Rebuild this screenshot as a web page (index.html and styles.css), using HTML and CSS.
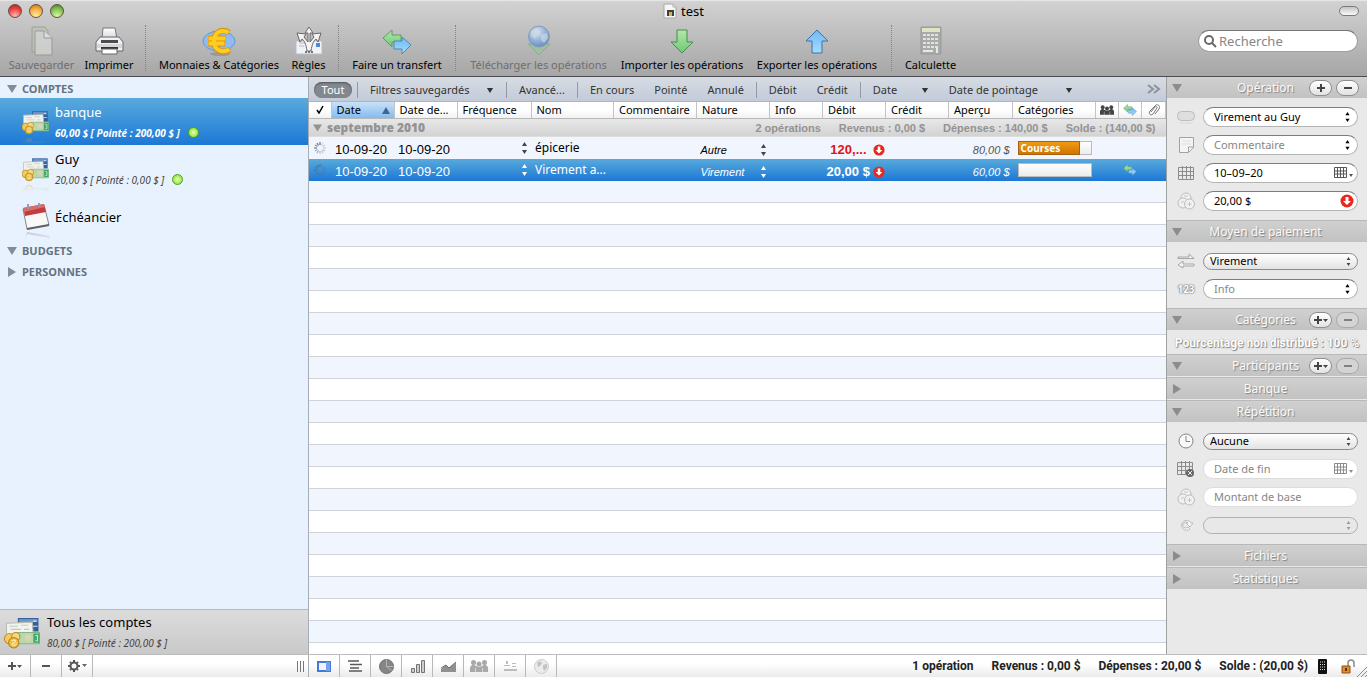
FILE: index.html
```html
<!DOCTYPE html>
<html lang="fr">
<head>
    <meta charset="UTF-8">
    <meta name="viewport" content="width=device-width, initial-scale=1.0">
    <title>test</title>
    <link rel="stylesheet" href="styles.css">
</head>
<body>
    <!-- shared icons -->
    <svg class="defs" aria-hidden="true">
        <defs>
            <linearGradient id="green" x1="0" y1="0" x2="0" y2="1"><stop offset="0" stop-color="#b4e8a8"/><stop offset="1" stop-color="#6cc878"/></linearGradient>
            <linearGradient id="blue" x1="0" y1="0" x2="0" y2="1"><stop offset="0" stop-color="#6fb8f5"/><stop offset="1" stop-color="#a4dcff"/></linearGradient>
            <linearGradient id="paper" x1="0" y1="0" x2="0" y2="1"><stop offset="0" stop-color="#ffffff"/><stop offset="1" stop-color="#d4d6da"/></linearGradient>
            <radialGradient id="globe" cx="0.4" cy="0.3" r="0.7"><stop offset="0" stop-color="#e4effc"/><stop offset="0.6" stop-color="#86aee0"/><stop offset="1" stop-color="#5a86c4"/></radialGradient>
        </defs>
        <symbol id="money" viewBox="0 0 36 32">
            <path d="M13 1h20v13H13z" fill="#2f5f9c"/>
            <path d="M14 2h18v3H14z" fill="#6f98c8"/>
            <path d="M28 4h3M27 9h5" stroke="#dfe9f5"/>
            <path d="M2 6l25-1 1 13-26 1z" fill="#f2f3ec" stroke="#b8bdb4"/>
            <path d="M5 9h8M16 8h7M6 12h10M19 12h5" stroke="#c3cac4"/>
            <path d="M12 15h22v11H12z" fill="#b9d8ac" stroke="#88b48c"/>
            <path d="M28 16h6v9h-6z" fill="#46a868"/>
            <circle cx="23" cy="20" r="3" fill="#d9d4b4"/>
            <path d="M30 18h2v5h-2" fill="none" stroke="#c9efd0"/>
            <circle cx="5" cy="21" r="5" fill="#f1cc63" stroke="#c08d25"/>
            <circle cx="11" cy="19" r="4" fill="#f4d87c" stroke="#c08d25"/>
            <circle cx="9" cy="25" r="5" fill="#eebf45" stroke="#b9821d"/>
            <path d="M7 23c4-2 5 1 2 2s-1 4 3 1" fill="none" stroke="#fff0b5"/>
        </symbol>
        <symbol id="transfer" viewBox="0 0 30 26">
            <path d="M1 9l9-8v5h9v7h-9v5z" fill="url(#green)" stroke="#5b9c63"/>
            <path d="M29 16l-9-8v4h-8v8h8v5z" fill="url(#blue)" stroke="#5187b8"/>
        </symbol>
        <symbol id="updown" viewBox="0 0 5 12">
            <path d="M0 4l2.500-4L5 4zM0 8l2.500 4L5 8z" fill="currentColor"/>
        </symbol>
        <symbol id="out" viewBox="0 0 14 14">
            <circle cx="7" cy="7" r="6.500" fill="#e8281c"/>
            <path d="M5.500 3h3v4h2.500L7 11 3 7h2.500z" fill="#fff"/>
        </symbol>
        <symbol id="down" viewBox="0 0 10 8"><path d="M0 0h10L5 8z" fill="currentColor"/></symbol>
        <symbol id="right" viewBox="0 0 8 10"><path d="M0 0v10l8-5z" fill="currentColor"/></symbol>
        <symbol id="grid" viewBox="0 0 16 14">
            <path d="M0.500 1.500h15v12h-15zM0 5.500h16M0 9.500h16M4.500 0v14M8.500 0v14M12.500 0v14" fill="none" stroke="currentColor"/>
        </symbol>
        <symbol id="coins" viewBox="0 0 18 18">
            <g fill="#f1f1f1" stroke="#bcbcbc"><circle cx="9" cy="6" r="5"/><circle cx="6" cy="11" r="5"/><circle cx="12.500" cy="12" r="5"/></g>
            <path d="M12.500 10v4M10.500 12h4M4 10h3M7 4h4" stroke="#c4c4c4" fill="none"/>
        </symbol>
        <symbol id="people" viewBox="0 0 18 14">
            <circle cx="3.500" cy="3.500" r="2.500" fill="currentColor"/><circle cx="14.500" cy="3.500" r="2.500" fill="currentColor"/><circle cx="9" cy="5" r="2.500" fill="currentColor"/>
            <path d="M0 13V8l3-3 3 2 3 1 3-1 3-2 3 3v5z" fill="currentColor"/>
            <path d="M5.500 9v4M12.500 9v4" stroke="#fff" stroke-opacity="0.500"/>
        </symbol>
        <symbol id="spinner" viewBox="0 0 12 12">
            <g stroke="#566b84" stroke-width="1.300">
                <path d="M6 0v3M3 1l1.500 2.500" opacity="0.900"/><path d="M1 3l2.500 1.500M0 6h3" opacity="0.700"/><path d="M1 9l2.500-1.500M3 11l1.500-2.500" opacity="0.500"/><path d="M6 9v3M9 11L7.500 8.500M11 9L8.500 7.500" opacity="0.350"/><path d="M9 6h3M11 3L8.500 4.500M9 1L7.500 3.500" opacity="0.250"/>
            </g>
        </symbol>
        <symbol id="plus" viewBox="0 0 10 10"><path d="M5 1v8M1 5h8" stroke="currentColor" stroke-width="2"/></symbol>
        <symbol id="minus" viewBox="0 0 10 10"><path d="M1 5h8" stroke="currentColor" stroke-width="2"/></symbol>
        <symbol id="plusmenu" viewBox="0 0 16 10"><path d="M5 1v8M1 5h8" stroke="currentColor" stroke-width="2"/><path d="M10 4h5l-2.500 3z" fill="currentColor"/></symbol>
    </svg>

    <header class="chrome">
        <div class="titlebar">
            <div class="lights">
                <button class="light red" aria-label="Fermer"></button>
                <button class="light orange" aria-label="Réduire"></button>
                <button class="light lime" aria-label="Agrandir"></button>
            </div>
            <h1>
                <svg width="14" height="16" viewBox="0 0 14 16"><path d="M1 1h9l3 3v11H1z" fill="#f7f7f2" stroke="#a9a9a4"/><path d="M10 1v3h3" fill="#ddd" stroke="#b5b5b0"/><path d="M4 7h7v6H4z" fill="#3a4048"/><path d="M6 9h3v4H6z" fill="#d8b24a"/></svg>
                test
            </h1>
            <button class="lozenge" aria-label="Barre d'outils"></button>
        </div>
        <div class="toolbar">
            <button class="tool" disabled>
                <svg width="32" height="32" viewBox="0 0 32 32"><path d="M6 2h13l3 4v21H6z" fill="#bdc3b5" stroke="#929a8e"/><path d="M9 6h9l8 7v17H9z" fill="#d3d4d2" stroke="#8f9391"/><path d="M18 6v7h8" fill="#e4e4e2" stroke="#8f9391"/></svg>
                <span>Sauvegarder</span>
            </button>
            <button class="tool">
                <svg width="32" height="32" viewBox="0 0 32 32"><path d="M9 14l1-11h12l2 11z" fill="url(#paper)" stroke="#777"/><path d="M3 17l4-5h19l4 5v9H3z" fill="#f0f0f2" stroke="#666"/><path d="M8 15h17v3H8z" fill="#4c4c4c"/><path d="M4 19h25v4H4z" fill="#d5d6da"/><path d="M8 23h17" stroke="#333" stroke-width="2"/><path d="M9 24h15v5H9z" fill="#fff" stroke="#666"/></svg>
                <span>Imprimer</span>
            </button>
            <i class="divider"></i>
            <button class="tool">
                <svg width="34" height="32" viewBox="0 0 34 32"><ellipse cx="18" cy="29" rx="10" ry="2" fill="#808080" opacity="0.500"/><ellipse cx="17" cy="16" rx="16" ry="10" fill="#8fbbf0" stroke="#6797d6"/><g fill="none"><path d="M27 7.500C20 3.500 12 7 12 16s8 13 16 8.500M6 13.500h18M6 18.500h17" stroke="#d79412" stroke-width="6"/><path d="M26.500 7.500C20 4 12 7 12 16s8 12.500 15.500 8.500M6.500 13.500h17M6.500 18.500h16" stroke="#ffcc22" stroke-width="4"/></g></svg>
                <span>Monnaies &amp; Catégories</span>
            </button>
            <button class="tool">
                <svg width="32" height="32" viewBox="0 0 32 32"><path d="M3 16h26v13H3z" fill="#f0f2f7" stroke="#b9bdc8"/><path d="M23 18h4v4h-4z" fill="#4d86dc"/><path d="M6 18h6M6 21h5" stroke="#bbb"/><path d="M14 26c-1-7-3-11-5-12l-2 3-3-9 9 1-2 3 4 5V8h-3l4-6 4 6h-3v9l4-5-2-3 9-1-3 9-2-3c-2 1-4 5-5 12z" fill="#f4f4f4" stroke="#666"/><path d="M12 27h8" stroke="#777" stroke-width="2" stroke-dasharray="2 1"/></svg>
                <span>Règles</span>
            </button>
            <i class="divider"></i>
            <button class="tool">
                <svg width="30" height="32" viewBox="0 -4 30 32"><use href="#transfer" width="30" height="26"/></svg>
                <span>Faire un transfert</span>
            </button>
            <i class="divider"></i>
            <button class="tool" disabled>
                <svg width="32" height="32" viewBox="0 0 32 32"><path d="M5 19h22L16 30z" fill="#9bc29c" stroke="#82a886"/><circle cx="16" cy="11.500" r="10.500" fill="url(#globe)" stroke="#7492b8"/><path d="M8 6l6-3 3 3-3 3-2 5-4-3zM18 10l6-2 1 5-4 5-3-3z" fill="#d3e0ee" opacity="0.700"/></svg>
                <span>Télécharger les opérations</span>
            </button>
            <button class="tool">
                <svg width="32" height="32" viewBox="0 0 32 32"><path d="M11 5h10v12h6L16 28 5 17h6z" fill="url(#green)" stroke="#4b8a50"/></svg>
                <span>Importer les opérations</span>
            </button>
            <button class="tool">
                <svg width="32" height="32" viewBox="0 0 32 32"><path d="M11 28h10V16h6L16 5 5 16h6z" fill="url(#blue)" stroke="#3c72a4"/></svg>
                <span>Exporter les opérations</span>
            </button>
            <i class="divider"></i>
            <button class="tool">
                <svg width="32" height="32" viewBox="0 0 32 32"><path d="M6 2h20v27H6z" fill="#a9aba8" stroke="#979997"/><path d="M7 3h18v4H7z" fill="#dfe4c4"/><path d="M8 10h16M8 14h16M8 18h16M8 22h16" stroke="#e0e2e0" stroke-width="2" stroke-dasharray="3 1"/><path d="M8 26h10M22 22v6" stroke="#e6e8e6" stroke-width="2"/></svg>
                <span>Calculette</span>
            </button>
            <label class="search">
                <svg width="14" height="14" viewBox="0 0 14 14"><circle cx="6" cy="6" r="4" fill="none" stroke="#6a6a6a" stroke-width="2"/><path d="M9 9l4 4" stroke="#6a6a6a" stroke-width="2"/></svg>
                <input type="search" placeholder="Recherche" aria-label="Recherche">
            </label>
        </div>
    </header>

    <main class="panes">
        <nav class="sidebar">
            <h2><svg width="10" height="8"><use href="#down"/></svg>COMPTES</h2>
            <ul>
                <li class="account selected">
                    <svg class="picture" width="28" height="26"><use href="#money"/></svg>
                    <div>
                        <a href="#banque">banque</a>
                        <p>60,00 $ [ Pointé : 200,00 $ ] <i class="led"></i></p>
                    </div>
                </li>
                <li class="account">
                    <svg class="picture" width="28" height="26"><use href="#money"/></svg>
                    <div>
                        <a href="#guy">Guy</a>
                        <p>20,00 $ [ Pointé : 0,00 $ ] <i class="led"></i></p>
                    </div>
                </li>
                <li class="account">
                    <svg class="picture" width="28" height="28" viewBox="0 0 28 28"><path d="M1 6l21-4 5 20-22 4z" fill="#f8f8f8" stroke="#85868a"/><path d="M1 5l21-4 2 8-21 4z" fill="#c23c3e"/><path d="M1 5l21-4 1 3L2 9z" fill="#da6d6c"/><path d="M6 1v5M17 0v4" stroke="#91a0a8" stroke-width="2"/><path d="M5 26l22-4" stroke="#5e6064" stroke-width="2"/></svg>
                    <div><a href="#echeancier">Échéancier</a></div>
                </li>
            </ul>
            <h2><svg width="10" height="8"><use href="#down"/></svg>BUDGETS</h2>
            <h2><svg width="10" height="10"><use href="#right"/></svg>PERSONNES</h2>
            <div class="account total">
                <svg width="38" height="33"><use href="#money"/></svg>
                <div>
                    <a href="#tous">Tous les comptes</a>
                    <p>80,00 $ [ Pointé : 200,00 $ ]</p>
                </div>
            </div>
        </nav>

        <section class="ledger">
            <div class="filters">
                <button class="active">Tout</button>
                <i></i>
                <label class="menu wide"><select aria-label="Filtres"><option>Filtres sauvegardés</option></select><svg width="8" height="5"><use href="#down"/></svg></label>
                <i></i>
                <button>Avancé...</button>
                <i></i>
                <button>En cours</button>
                <button>Pointé</button>
                <button>Annulé</button>
                <i></i>
                <button>Débit</button>
                <button>Crédit</button>
                <i></i>
                <label class="menu"><select aria-label="Date"><option>Date</option></select><svg width="8" height="5"><use href="#down"/></svg></label>
                <label class="menu wide"><select aria-label="Date de pointage"><option>Date de pointage</option></select><svg width="8" height="5"><use href="#down"/></svg></label>
                <button class="more" aria-label="Plus de filtres"><svg width="14" height="10" viewBox="0 0 14 10"><path d="M1 1l5 4-5 4M7 1l5 4-5 4" fill="none" stroke="#8d929b" stroke-width="2"/></svg></button>
            </div>
            <table>
                <colgroup>
                    <col class="c22"><col class="c63"><col class="c63"><col class="c74"><col><col class="c83"><col class="c73"><col class="c53"><col class="c63"><col class="c63"><col class="c64"><col class="c83"><col class="c23"><col class="c23"><col class="c24">
                </colgroup>
                <thead>
                    <tr>
                        <th class="mark"><svg width="8" height="9" viewBox="0 0 8 9"><path d="M1 5l2 3 4-7" fill="none" stroke="#000" stroke-width="1.500"/></svg></th>
                        <th class="sorted">Date <svg width="8" height="7" viewBox="0 0 8 7"><path d="M0 7h8L4 0z" fill="#44658f"/></svg></th>
                        <th>Date de...</th>
                        <th>Fréquence</th>
                        <th>Nom</th>
                        <th>Commentaire</th>
                        <th>Nature</th>
                        <th>Info</th>
                        <th>Débit</th>
                        <th>Crédit</th>
                        <th>Aperçu</th>
                        <th>Catégories</th>
                        <th class="mark"><svg width="14" height="12"><use href="#people"/></svg></th>
                        <th class="mark"><svg width="14" height="12"><use href="#transfer"/></svg></th>
                        <th class="mark"><svg width="12" height="12" viewBox="0 0 12 12"><path d="M3 8l4-5c1-1 3 0 2 1L5 10c-2 2-5 0-3-3l5-5c2-3 6 0 4 3l-4 5" fill="none" stroke="#777"/></svg></th>
                    </tr>
                </thead>
                <tbody>
                    <tr class="group">
                        <td colspan="15">
                            <div>
                                <svg width="9" height="8"><use href="#down"/></svg>
                                <strong>septembre 2010</strong>
                                <span>2 opérations</span>
                                <span>Revenus : 0,00 $</span>
                                <span>Dépenses : 140,00 $</span>
                                <span>Solde : (140,00 $)</span>
                            </div>
                        </td>
                    </tr>
                    <tr>
                        <td class="mark"><svg width="12" height="12"><use href="#spinner"/></svg></td>
                        <td class="date">10-09-20</td>
                        <td class="date">10-09-20</td>
                        <td class="step"><svg width="5" height="12"><use href="#updown"/></svg></td>
                        <td>épicerie</td>
                        <td></td>
                        <td class="kind">
                            <div>Autre <svg width="5" height="12"><use href="#updown"/></svg></div>
                        </td>
                        <td></td>
                        <td class="amount red" colspan="2"><div><span>120,...</span><svg width="12" height="12"><use href="#out"/></svg></div></td>
                        <td class="preview">80,00 $</td>
                        <td class="share"><div class="bar"><span style="width: 84%">Courses</span></div></td>
                        <td></td>
                        <td></td>
                        <td></td>
                    </tr>
                    <tr class="selected">
                        <td class="mark"><svg width="12" height="12"><use href="#spinner"/></svg></td>
                        <td class="date">10-09-20</td>
                        <td class="date">10-09-20</td>
                        <td class="step"><svg width="5" height="12"><use href="#updown"/></svg></td>
                        <td>Virement a...</td>
                        <td></td>
                        <td class="kind">
                            <div>Virement <svg width="5" height="12"><use href="#updown"/></svg></div>
                        </td>
                        <td></td>
                        <td class="amount" colspan="2"><div><span>20,00 $</span><svg width="12" height="12"><use href="#out"/></svg></div></td>
                        <td class="preview">60,00 $</td>
                        <td class="share"><div class="bar"></div></td>
                        <td></td>
                        <td class="mark"><svg width="14" height="12"><use href="#transfer"/></svg></td>
                        <td></td>
                    </tr>
                </tbody>
            </table>
            <div class="stripes"></div>
        </section>

        <aside class="inspector">
            <h2>
                <svg width="10" height="8"><use href="#down"/></svg><span>Opération</span>
                <div><button aria-label="Ajouter"><svg width="10" height="10"><use href="#plus"/></svg></button><button aria-label="Supprimer"><svg width="10" height="10"><use href="#minus"/></svg></button></div>
            </h2>
            <div class="fields">
                <div class="row">
                    <label for="payee"><svg width="18" height="14" viewBox="0 0 18 14"><rect x="0.500" y="1.500" width="17" height="9" rx="4" fill="#dedede" stroke="#bdbdbd"/><path d="M3 13h12" stroke="#d8d8d8"/></svg></label>
                    <div class="field"><input id="payee" value="Virement au Guy" aria-label="Nom"><svg class="arrows" width="5" height="10"><use href="#updown"/></svg></div>
                </div>
                <div class="row">
                    <label for="note"><svg width="15" height="16" viewBox="0 0 15 16"><path d="M0.500 0.500h14v10l-5 5h-9zM9.500 15v-5h5" fill="#f4f4f4" stroke="#a2a2a2"/><path d="M3 4h9M3 7h9" stroke="#ddd"/></svg></label>
                    <div class="field"><input id="note" placeholder="Commentaire" aria-label="Commentaire"><svg class="arrows" width="5" height="10"><use href="#updown"/></svg></div>
                </div>
                <div class="row">
                    <label for="day"><svg class="grey" width="16" height="14"><use href="#grid"/></svg></label>
                    <div class="field"><input id="day" value="10–09–20" aria-label="Date"><svg class="dark" width="20" height="12" viewBox="0 0 20 12"><path d="M0.500 0.500h12v10h-12zM0 4h13M0 7h13M3.500 0v11M6.500 0v11M9.500 0v11" fill="none" stroke="currentColor"/><path d="M15 7h4l-2 3z" fill="currentColor"/></svg></div>
                </div>
                <div class="row">
                    <label for="sum"><svg width="18" height="18"><use href="#coins"/></svg></label>
                    <div class="field"><input id="sum" value="20,00 $" aria-label="Montant"><svg width="14" height="14"><use href="#out"/></svg></div>
                </div>
            </div>

            <h2><svg width="10" height="8"><use href="#down"/></svg><span>Moyen de paiement</span></h2>
            <div class="fields">
                <div class="row">
                    <label for="method"><svg width="18" height="16" viewBox="0 0 18 16"><path d="M1 4h11V1l5 4.500H1zM17 11H6V8l-5 4 5 3v-2h11z" fill="#f3f3f3" stroke="#a6a6a6"/></svg></label>
                    <div class="popup"><select id="method" aria-label="Moyen"><option>Virement</option></select><svg width="5" height="9"><use href="#updown"/></svg></div>
                </div>
                <div class="row">
                    <label for="info" class="digits">123</label>
                    <div class="field"><input id="info" placeholder="Info"><svg class="arrows" width="5" height="10"><use href="#updown"/></svg></div>
                </div>
            </div>

            <h2>
                <svg width="10" height="8"><use href="#down"/></svg><span>Catégories</span>
                <div><button aria-label="Ajouter"><svg width="16" height="10"><use href="#plusmenu"/></svg></button><button disabled aria-label="Supprimer"><svg width="10" height="10"><use href="#minus"/></svg></button></div>
            </h2>
            <p class="leftover">Pourcentage non distribué : 100 %</p>

            <h2>
                <svg width="10" height="8"><use href="#down"/></svg><span>Participants</span>
                <div><button aria-label="Ajouter"><svg width="16" height="10"><use href="#plusmenu"/></svg></button><button disabled aria-label="Supprimer"><svg width="10" height="10"><use href="#minus"/></svg></button></div>
            </h2>
            <h2><svg width="10" height="10"><use href="#right"/></svg><span>Banque</span></h2>
            <h2><svg width="10" height="8"><use href="#down"/></svg><span>Répétition</span></h2>
            <div class="fields">
                <div class="row">
                    <label for="repeat"><svg width="16" height="16" viewBox="0 0 16 16"><circle cx="8" cy="8" r="7" fill="#fafafa" stroke="#858585"/><path d="M8 3v5.500h4" fill="none" stroke="#858585"/></svg></label>
                    <div class="popup"><select id="repeat" aria-label="Répétition"><option>Aucune</option></select><svg width="5" height="9"><use href="#updown"/></svg></div>
                </div>
                <div class="row">
                    <label for="end"><svg class="grey" width="18" height="17" viewBox="0 0 18 17"><use href="#grid" width="16" height="14"/><circle cx="13" cy="12" r="4" fill="#666"/><path d="M11 10l4 4M15 10l-4 4" stroke="#eee"/></svg></label>
                    <div class="field flat"><input id="end" placeholder="Date de fin" aria-label="Date de fin"><svg class="grey" width="20" height="12" viewBox="0 0 20 12"><path d="M0.500 0.500h12v10h-12zM0 4h13M0 7h13M3.500 0v11M6.500 0v11M9.500 0v11" fill="none" stroke="currentColor"/><path d="M15 7h4l-2 3z" fill="currentColor"/></svg></div>
                </div>
                <div class="row">
                    <label for="base"><svg width="18" height="18"><use href="#coins"/></svg></label>
                    <div class="field flat"><input id="base" placeholder="Montant de base" aria-label="Montant de base"></div>
                </div>
                <div class="row">
                    <label for="cycle"><svg width="16" height="16" viewBox="0 0 16 16"><path d="M12 12a5 5 0 1 1 1-6h2l-3 4-4-4h2a3 3 0 1 0 0 4z" fill="#f6f6f6" stroke="#bdbdbd"/></svg></label>
                    <div class="popup off"><select id="cycle" disabled aria-label="Cycle"><option></option></select><svg width="5" height="9"><use href="#updown"/></svg></div>
                </div>
            </div>
            <h2><svg width="10" height="10"><use href="#right"/></svg><span>Fichiers</span></h2>
            <h2><svg width="10" height="10"><use href="#right"/></svg><span>Statistiques</span></h2>
        </aside>
    </main>

    <footer class="status">
        <div class="side-tools">
            <button aria-label="Ajouter un compte"><svg width="16" height="10"><use href="#plusmenu"/></svg></button>
            <button aria-label="Supprimer le compte"><svg width="10" height="10"><use href="#minus"/></svg></button>
            <button aria-label="Actions"><svg width="20" height="14" viewBox="0 0 20 14"><circle cx="7" cy="7" r="3.500" fill="none" stroke="#555" stroke-width="2"/><path d="M7 1v2M7 11v2M1 7h2M11 7h2M3 3l1 1M10 10l1 1M11 3l-1 1M3 11l1-1" stroke="#555" stroke-width="2"/><path d="M15 5h5l-2.500 3z" fill="#666"/></svg></button>
            <span class="grip"></span>
        </div>
        <div class="views">
            <button aria-label="Opérations"><svg width="14" height="11" viewBox="0 0 14 11"><path d="M1 1h12v9H1z" fill="#eef4ff" stroke="#4379d8" stroke-width="2"/><path d="M9 1h4v9H9z" fill="#73a2ee"/></svg></button>
            <button aria-label="Liste"><svg width="14" height="12" viewBox="0 0 14 12"><path d="M0 1h11M2 4.500h12M2 8h9M1 11h13" stroke="#5a5a5a" stroke-width="1.500"/></svg></button>
            <button aria-label="Secteurs"><svg width="15" height="15" viewBox="0 0 15 15"><circle cx="7.500" cy="7.500" r="7" fill="#858585" stroke="#707070"/><path d="M7.500 0.500v7l5 4M7.500 7.500h7" fill="none" stroke="#b5b5b5"/></svg></button>
            <button aria-label="Barres"><svg width="15" height="13" viewBox="0 0 15 13"><path d="M1.500 8.500h3v4h-3zM6.500 4.500h3v8h-3zM11.500 0.500h3v12h-3z" fill="#ccc" stroke="#747474"/></svg></button>
            <button aria-label="Courbes"><svg width="17" height="11" viewBox="0 0 17 11"><path d="M1 11V8l5-4 3 3 7-6v10z" fill="#909090"/><path d="M1 7l5-3 3 3 7-6" fill="none" stroke="#707070"/></svg></button>
            <button class="pale" aria-label="Personnes"><svg width="18" height="14"><use href="#people"/></svg></button>
            <button class="pale" aria-label="Fiches"><svg width="15" height="12" viewBox="0 0 15 12"><path d="M3 1h2v3H3zM1 5h6v1H1zM9 3h4v1H9zM9 6h4v1H9zM1 9h13v2H1z" fill="#bcbcbc"/></svg></button>
            <button class="pale" aria-label="Web"><svg width="15" height="15" viewBox="0 0 15 15"><circle cx="7.500" cy="7.500" r="7" fill="#ececec" stroke="#cbcbcb"/><path d="M3 4l3-2 2 2-2 3-2 1zM9 6l4-1v4l-3 3-1-3z" fill="#c2c2c2"/></svg></button>
        </div>
        <div class="sums">
            <span>1 opération</span>
            <span>Revenus : 0,00 $</span>
            <span>Dépenses : 20,00 $</span>
            <span>Solde : (20,00 $)</span>
        </div>
        <div class="extras">
            <svg width="9" height="15" viewBox="0 0 9 15"><rect width="9" height="15" rx="1" fill="#111"/><path d="M2 3h1M4 3h1M6 3h1M2 5.500h1M4 5.500h1M6 5.500h1M2 8h1M4 8h1M6 8h1M2 10.500h1M4 10.500h1M6 10.500h1" stroke="#ddd"/></svg>
            <svg width="15" height="15" viewBox="0 0 15 15"><path d="M7 7V4a3 3 0 0 1 6 0v4" fill="none" stroke="#8b8b8b" stroke-width="1.500"/><path d="M1 7h8v7H1z" fill="#e08d28" stroke="#8f5312"/><path d="M5 9v3" stroke="#5e3308" stroke-width="2"/></svg>
            <svg class="resize" width="11" height="11" viewBox="0 0 11 11"><path d="M1 11L11 1M5 11l6-6M9 11l2-2" stroke="#8d8d8d"/></svg>
        </div>
    </footer>
</body>
</html>
```
FILE: styles.css
```css
* {
    box-sizing: border-box;
}
body {
    display: flex;
    flex-direction: column;
    height: 100vh;
    margin: 0;
    overflow: hidden;
    background: #e8e8e8;
    color: #000;
    font-family: 'Noto Sans', 'Open Sans', sans-serif;
    font-size: 11px;
    line-height: 16px;
}
h1, h2, p, ul {
    margin: 0;
    padding: 0;
    font-size: inherit;
    font-weight: normal;
}
ul {
    list-style: none;
}
button, input, select {
    margin: 0;
    padding: 0;
    border: 0;
    background: none;
    color: inherit;
    font: inherit;
}
select {
    appearance: none;
    outline: 0;
}
select:disabled {
    opacity: 1;
}
svg {
    flex: none;
}
.defs {
    position: absolute;
    width: 0;
    height: 0;
}

/* title bar and toolbar */
.chrome {
    height: 77px;
    flex: none;
    background: linear-gradient(#d2d2d2, #a6a6a6);
    border-top: 1px solid #e6e6e6;
    border-bottom: 1px solid #4c4c52;
}
.titlebar {
    display: grid;
    grid-template-columns: 1fr auto 1fr;
    align-items: center;
    height: 20px;
    padding: 0 8px;
}
.titlebar h1 {
    display: flex;
    align-items: center;
    gap: 4px;
    font-size: 13px;
}
.lights {
    display: flex;
    gap: 7px;
}
.light {
    width: 14px;
    height: 14px;
    border: 1px solid #6b4b45;
    border-radius: 50%;
}
.red {
    background: radial-gradient(circle at 50% 90%, #ffb9b4, #e8403e 60%, #a81f20);
}
.orange {
    background: radial-gradient(circle at 50% 90%, #fff3a0, #f4a93c 60%, #b8691c);
}
.lime {
    background: radial-gradient(circle at 50% 90%, #dcf7a8, #7cbf4c 60%, #3f7a26);
}
.lozenge {
    justify-self: end;
    width: 20px;
    height: 10px;
    border: 1px solid #7a7a7a;
    border-radius: 5px;
    background: linear-gradient(#c4c4c4, #fafafa);
}
.toolbar {
    display: grid;
    grid-template-columns: 65px 48px 3px 122px 35px 3px 92px 3px 141px 124px 124px 3px 53px 1fr;
    column-gap: 11px;
    align-items: start;
    padding: 4px 9px 0;
}
.tool {
    display: flex;
    flex-direction: column;
    align-items: center;
    white-space: nowrap;
}
.tool span {
    line-height: 15px;
}
.tool:disabled {
    color: #6f6f6f;
}
.tool:disabled svg {
    opacity: 0.8;
}
.divider {
    height: 46px;
    border-left: 1px dotted #848484;
    margin-left: 1px;
}
.search {
    display: flex;
    align-items: center;
    gap: 2px;
    justify-self: end;
    width: 160px;
    height: 22px;
    margin-top: 5px;
    padding: 0 4px;
    border: 1px solid #a0a0a0;
    border-top-color: #757575;
    border-radius: 11px;
    background: #fff;
    font-size: 13px;
}
.search input {
    width: 100%;
    outline: 0;
}
::placeholder {
    color: #868686;
    opacity: 1;
}

/* accounts */
.panes {
    display: flex;
    flex: 1;
    min-height: 0;
}
.sidebar {
    display: flex;
    flex-direction: column;
    width: 309px;
    flex: none;
    border-right: 1px solid #a5adb8;
    background: #e8f2fe;
}
.sidebar h2 {
    display: flex;
    align-items: center;
    gap: 5px;
    height: 21px;
    padding: 2px 7px 0;
    color: #657280;
    font-weight: bold;
}
.sidebar h2 svg {
    color: #858b93;
}
.account {
    display: flex;
    align-items: center;
    gap: 5px;
    height: 47px;
    padding: 2px 0 0 22px;
}
.account a {
    color: inherit;
    text-decoration: none;
    font-size: 13px;
    line-height: 20px;
}
.account p {
    display: flex;
    align-items: center;
    gap: 8px;
    color: #444;
    font-style: italic;
    font-size: 10px;
    line-height: 22px;
}
.picture {
    -webkit-box-reflect: below 0 linear-gradient(transparent 65%, rgba(0, 0, 0, 0.3));
}
.selected {
    background: linear-gradient(#59aadb, #1c78d6);
    color: #fff;
}
.account.selected p {
    color: #fff;
    font-weight: bold;
}
.led {
    width: 11px;
    height: 11px;
    border: 1px solid #50a01c;
    border-radius: 50%;
    background: radial-gradient(circle, #e4ffb0, #7bdc1c);
}
.total {
    height: 45px;
    margin-top: auto;
    padding-left: 4px;
    border-top: 1px solid #b4b9c0;
    background: linear-gradient(#dcdcdc, #c9c9c9);
}

/* operations */
.ledger {
    display: flex;
    flex-direction: column;
    flex: 1;
    min-width: 0;
}
.filters {
    display: flex;
    align-items: center;
    height: 25px;
    padding: 2px 5px 0;
    border-bottom: 1px solid #b0b4bc;
    background: linear-gradient(#d7dce4, #c3cbd9);
    color: #333;
}
.filters > i {
    width: 1px;
    height: 16px;
    margin: 0 2px;
    background: #9499a3;
}
.filters button, .menu {
    padding: 0 10px;
    white-space: nowrap;
}
.filters .active {
    width: 38px;
    margin-right: 3px;
    padding: 0;
    border-radius: 8px;
    background: #83878f;
    box-shadow: inset 0 1px 2px #50555c;
    color: #fff;
}
.menu {
    display: flex;
    align-items: center;
    width: 76px;
}
.menu.wide {
    width: 144px;
}
.menu select {
    flex: 1;
    min-width: 0;
}
.filters .more {
    margin-left: auto;
    padding: 0;
}
table {
    width: 100%;
    border-collapse: collapse;
    table-layout: fixed;
}
.c22 { width: 22px; }
.c23 { width: 23px; }
.c24 { width: 24px; }
.c53 { width: 53px; }
.c63 { width: 63px; }
.c64 { width: 64px; }
.c73 { width: 73px; }
.c74 { width: 74px; }
.c83 { width: 83px; }
th, td {
    padding: 0 4px;
    overflow: hidden;
    text-align: left;
    white-space: nowrap;
}
th {
    height: 16px;
    padding-left: 5px;
    border-right: 1px solid #c4c4c4;
    border-bottom: 1px solid #b8b8b8;
    background: linear-gradient(#fff 50%, #f1f1f1);
    font-weight: normal;
    line-height: 14px;
}
th.sorted {
    background: linear-gradient(#c9e1f8, #83bbf0);
}
.sorted svg {
    float: right;
    margin-top: 4px;
}
th.mark, td.mark {
    padding: 0;
    text-align: center;
}
.mark svg {
    display: block;
    margin: auto;
    color: #444;
}
.group td {
    height: 19px;
    background: linear-gradient(#e8e8e8, #d2d2d2);
}
.group div {
    display: flex;
    align-items: center;
    gap: 18px;
    padding-right: 6px;
    color: #939393;
    font-family: 'Liberation Sans', sans-serif;
    font-weight: bold;
}
.group svg {
    margin-right: -13px;
}
.group strong {
    flex: 1;
    font-family: 'Noto Sans', sans-serif;
    font-size: 12px;
}
tbody tr {
    height: 22px;
    background: #f0f5fe;
}
tbody .group {
    height: 19px;
}
tbody .selected {
    background: linear-gradient(#59aadb, #1c78d6);
}
tbody td {
    font-size: 12px;
}
td.date, td.amount {
    font-family: 'Liberation Sans', sans-serif;
    font-size: 13px;
}
td.date, td.amount, td.kind, td.preview {
    padding-top: 3px;
}
.group td, .kind {
    font-size: 11px;
}
.step {
    text-align: right;
}
.step svg {
    display: block;
    margin-left: auto;
}
.step svg, .kind svg {
    color: #444;
}
.selected .step svg, .selected .kind svg {
    color: #fff;
}
.kind div, .amount div {
    display: flex;
    align-items: center;
    justify-content: space-between;
}
.kind {
    font-family: 'Liberation Sans', sans-serif;
    font-style: italic;
}
.amount div {
    justify-content: flex-start;
    gap: 6px;
}
.amount span {
    width: 40px;
    font-weight: bold;
    text-align: right;
}
td.red {
    background: none;
    color: #e0150c;
}
.preview {
    padding-right: 3px;
    color: #555;
    font-family: 'Liberation Sans', sans-serif;
    font-style: italic;
    text-align: right;
}
td.preview {
    font-size: 11px;
}
.selected .preview {
    color: #fff;
}
td.share {
    padding-left: 5px;
}
.bar {
    height: 14px;
    border: 1px solid #bbb;
    background: linear-gradient(#fff, #ececec);
    font-size: 10px;
    font-weight: bold;
    line-height: 12px;
}
.bar span {
    display: block;
    padding-left: 2px;
    background: linear-gradient(#f39a12, #cf7400);
    box-shadow: 0 0 0 1px #a8640c;
    color: #fff;
}
.stripes {
    flex: 1;
    background: repeating-linear-gradient(#f0f5fe 0 21px, #d0d4da 21px 22px, #fff 22px 43px, #d0d4da 43px 44px);
}

/* inspector */
.inspector {
    width: 201px;
    flex: none;
    border-left: 1px solid #a0a0a0;
    background: #e9e9e9;
}
.inspector h2 {
    display: grid;
    grid-template-columns: 1fr auto 1fr;
    align-items: center;
    height: 22px;
    padding: 0 8px 0 5px;
    border-top: 1px solid #b8b8b8;
    background: linear-gradient(#d0d0d0, #c2c2c2);
    color: #fafafa;
    font-size: 12px;
    text-shadow: 1px 1px 1px #808080;
}
.inspector h2:first-child {
    height: 21px;
    border-top: 0;
}
.inspector h2 + h2 {
    margin-top: 1px;
}
.inspector h2 > svg {
    color: #8c8c8c;
}
.inspector h2 div {
    display: flex;
    justify-content: flex-end;
    gap: 4px;
}
.inspector h2 button {
    display: flex;
    align-items: center;
    justify-content: center;
    width: 23px;
    height: 16px;
    border: 1px solid #8e8e8e;
    border-radius: 8px;
    background: linear-gradient(#fff, #e2e2e2);
    color: #444;
}
.inspector h2 button:disabled {
    border-color: #a8a8a8;
    background: #d4d4d4;
    color: #808080;
}
.fields {
    padding: 5px 9px 5px 10px;
}
.row {
    display: grid;
    grid-template-columns: 18px 1fr;
    column-gap: 8px;
    align-items: center;
    height: 28px;
}
.row label {
    display: flex;
    justify-content: center;
}
.grey {
    color: #8c8c8c;
}
.dark {
    color: #555;
}
.digits {
    color: #fff;
    font-size: 10px;
    font-weight: bold;
    text-shadow: 0 0 1px #555, 0 0 2px #555;
}
.field, .popup {
    display: flex;
    align-items: center;
    height: 20px;
    padding: 0 6px 0 10px;
    border: 1px solid #b4b4b4;
    border-top-color: #7c7c7c;
    border-radius: 10px;
    background: #fff;
}
.field.flat {
    border-color: #dcdcdc;
}
.field input, .popup select {
    flex: 1;
    width: 100%;
    min-width: 0;
    height: 16px;
    outline: 0;
}
.field svg {
    margin-right: -3px;
}
.field .arrows {
    margin-right: 1px;
}
.popup {
    height: 17px;
    padding-left: 6px;
    border-color: #8a8a8a;
    background: linear-gradient(#fff, #e3e3e3);
}
.popup svg {
    color: #444;
}
.popup.off {
    border-color: #b0b0b0;
    background: #e8e8e8;
}
.off svg {
    color: #999;
}
.leftover {
    height: 24px;
    color: #fff;
    font-family: Roboto, 'Liberation Sans', sans-serif;
    font-size: 12px;
    font-weight: bold;
    line-height: 26px;
    text-align: center;
    text-shadow: 0 0 1px #888, 1px 1px 1px #888;
    white-space: nowrap;
}

/* bottom bar */
.status {
    display: flex;
    height: 23px;
    flex: none;
    border-top: 1px solid #bcbcbc;
    background: linear-gradient(#fff 40%, #ebebeb);
}
.status button {
    display: flex;
    align-items: center;
    justify-content: center;
    width: 31px;
    height: 22px;
    border-right: 1px solid #b8b8b8;
    color: #555;
}
.status .pale {
    color: #a9a9a9;
}
.side-tools, .views, .sums, .extras {
    display: flex;
    align-items: center;
}
.side-tools {
    width: 309px;
    border-right: 1px solid #a5adb8;
}
.grip {
    width: 8px;
    height: 11px;
    margin: 0 3px 0 auto;
    background: repeating-linear-gradient(to right, #777 0 1px, transparent 1px 3px);
}
.sums {
    gap: 18px;
    margin-left: auto;
    color: #222;
    font-family: Roboto, 'Liberation Sans', sans-serif;
    font-size: 12px;
    font-weight: bold;
}
.extras {
    gap: 14px;
    padding-left: 10px;
}
.resize {
    align-self: flex-end;
    margin-left: -14px;
}
```
